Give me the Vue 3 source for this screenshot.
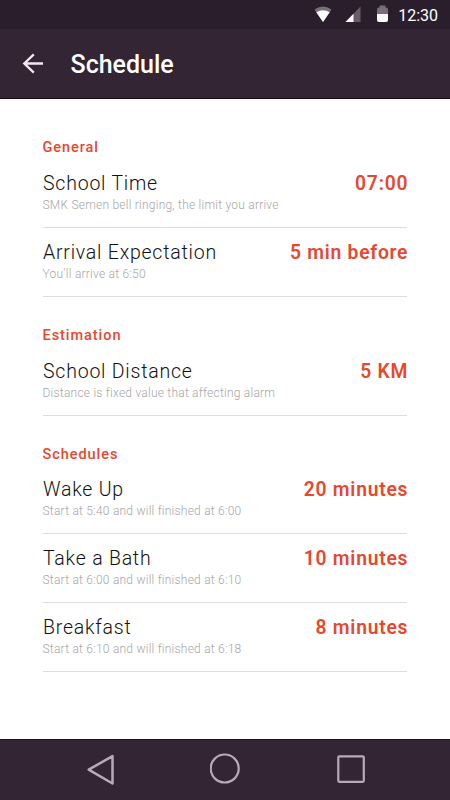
<script setup>
const sections = [
  {
    name: 'General',
    rows: [
      { title: 'School Time', note: 'SMK Semen bell ringing, the limit you arrive', value: '07:00' },
      { title: 'Arrival Expectation', note: 'You’ll arrive at 6:50', value: '5 min before' },
    ],
  },
  {
    name: 'Estimation',
    rows: [
      { title: 'School Distance', note: 'Distance is fixed value that affecting alarm', value: '5 KM' },
    ],
  },
  {
    name: 'Schedules',
    rows: [
      { title: 'Wake Up', note: 'Start at 5:40 and will finished at 6:00', value: '20 minutes' },
      { title: 'Take a Bath', note: 'Start at 6:00 and will finished at 6:10', value: '10 minutes' },
      { title: 'Breakfast', note: 'Start at 6:10 and will finished at 6:18', value: '8 minutes' },
    ],
  },
]
</script>

<template>
  <div class="screen">
    <div class="status">
      <svg class="status-icons" width="80" height="29" viewBox="0 0 80 29">
        <path d="M4.500 9.500Q13 3.500 21.500 9.500L13 22Z" fill="#786d78" />
        <path d="M6.300 12.200Q13 8.300 19.700 12.200L13 22Z" fill="#fff" />
        <path d="M35.500 22L50.500 6.500V22Z" fill="#685c69" />
        <path d="M35.500 22L43.500 13.800V22Z" fill="#fff" />
        <path d="M69.500 7.500V6.500Q69.500 5.500 70.500 5.500H74.500Q75.500 5.500 75.500 6.500V7.500H76Q78 7.500 78 9.500V14H67V9.500Q67 7.500 69 7.500Z" fill="#786d78" />
        <path d="M67 14H78V20Q78 22 76 22H69Q67 22 67 20Z" fill="#fff" />
      </svg>
      <span class="clock">12:30</span>
    </div>
    <header class="bar">
      <svg class="back" width="24" height="24" viewBox="0 0 24 24">
        <path d="M12.800 2.300L3.300 11.500L12.800 20.700M3.300 11.500H22" fill="none" stroke="#f3e8f2" stroke-width="2.300" />
      </svg>
      <h1 class="heading">Schedule</h1>
    </header>
    <main class="content">
      <section v-for="section in sections" :key="section.name">
        <h2 class="section-name">{{ section.name }}</h2>
        <div v-for="row in section.rows" :key="row.title" class="row">
          <div class="line">
            <span class="title">{{ row.title }}</span>
            <span class="value">{{ row.value }}</span>
          </div>
          <p class="note">{{ row.note }}</p>
        </div>
      </section>
    </main>
    <nav class="nav">
      <svg width="30" height="32" viewBox="0 0 30 32">
        <path d="M3.700 16.700L27.500 3.100V30.500Z" fill="none" stroke="#b9a9b9" stroke-width="2.500" stroke-linejoin="round" />
      </svg>
      <svg width="32" height="32" viewBox="0 0 32 32">
        <circle cx="14.700" cy="15.500" r="14" fill="none" stroke="#b9a9b9" stroke-width="2.200" />
      </svg>
      <svg width="30" height="32" viewBox="0 0 30 32">
        <rect x="2.300" y="3.300" width="25.500" height="25.500" rx="1" fill="none" stroke="#b9a9b9" stroke-width="2.200" />
      </svg>
    </nav>
  </div>
</template>

<style>
body {
  margin: 0;
}
</style>

<style scoped>
.screen {
  display: flex;
  flex-direction: column;
  width: 450px;
  height: 800px;
  overflow: hidden;
  background: #fff;
  font-family: Roboto, "Liberation Sans", sans-serif;
}
.status {
  display: flex;
  align-items: center;
  justify-content: flex-end;
  box-sizing: border-box;
  height: 29px;
  padding-right: 12px;
  background: #2b1e2c;
  color: #fff;
}
.status-icons {
  margin-right: 8px;
}
.clock {
  padding-top: 2px;
  font-size: 16px;
  line-height: 20px;
}
.bar {
  display: flex;
  align-items: center;
  box-sizing: border-box;
  height: 70px;
  padding-left: 21px;
  border-bottom: 1px solid #180d19;
  background: #342534;
}
.heading {
  margin: 3px 0 0 25.500px;
  color: #fff;
  font-size: 25px;
  font-weight: 500;
  line-height: 30px;
}
.content {
  flex: 1;
  padding: 10.300px 43px 0;
}
.section-name {
  box-sizing: border-box;
  height: 50px;
  margin: 0 0 0 -0.500px;
  padding-top: 29px;
  color: #e5482f;
  font-size: 14.500px;
  font-weight: 500;
  letter-spacing: 0.950px;
  line-height: 20px;
}
.row {
  box-sizing: border-box;
  height: 68.750px;
  padding-top: 12.900px;
  border-bottom: 1px solid #dedede;
}
.line {
  display: flex;
  justify-content: space-between;
  line-height: 24px;
}
.title {
  color: #111;
  font-size: 19.500px;
  font-weight: 300;
  letter-spacing: 0.780px;
}
.value {
  margin-right: -1.200px;
  color: #e5482f;
  font-size: 19.300px;
  font-weight: 600;
  letter-spacing: 0.750px;
}
.note {
  margin: 1px 0 0 -0.500px;
  color: #a6a6a6;
  font-size: 12px;
  font-weight: 300;
  letter-spacing: 0.230px;
  line-height: 16px;
}
.nav {
  display: flex;
  align-items: center;
  justify-content: space-between;
  box-sizing: border-box;
  height: 61px;
  padding: 0 84px 2px 85px;
  border-top: 1px solid #1b101c;
  background: #342534;
}
</style>
